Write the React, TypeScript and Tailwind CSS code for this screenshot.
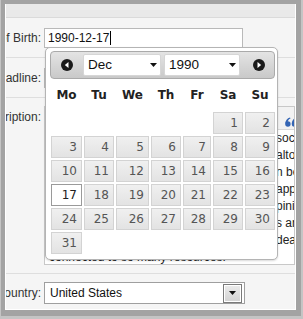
import React from "react";

// December 1990 starts on a Saturday
const weeks: (number | null)[][] = [
  [null, null, null, null, null, 1, 2],
  [3, 4, 5, 6, 7, 8, 9],
  [10, 11, 12, 13, 14, 15, 16],
  [17, 18, 19, 20, 21, 22, 23],
  [24, 25, 26, 27, 28, 29, 30],
  [31, null, null, null, null, null, null],
];

const dayNames = ["Mo", "Tu", "We", "Th", "Fr", "Sa", "Su"];

const gridCols =
  "grid grid-cols-[31px_30px_33px_30px_28px_30px_30px] gap-x-[2px]";

// each line: text hidden under the picker, then the part that peeks out on the right
const editorLines: [string, string][] = [
  ["I have always been interested in how ", "social networks"],
  ["people come together, and I think that ", "altogether"],
  ["a small community of makers ca", "n be"],
  ["a great place to learn, share and ", "apply"],
  ["new skills. I enjoy reading other o", "pinions"],
  ["and I believe that good idea", "s are"],
  ["worth sharing, so I post my i", "deas"],
];

function CircleArrow({ dir }: { dir: "prev" | "next" }) {
  return (
    <svg width="12" height="12" viewBox="0 0 12 12" className="shrink-0">
      <circle cx="6" cy="6" r="6" fill="#1a1a1a" />
      {dir === "prev" ? (
        <path d="M7.5 3 L3.8 6 L7.5 9 Z" fill="#fff" />
      ) : (
        <path d="M4.5 3 L8.2 6 L4.5 9 Z" fill="#fff" />
      )}
    </svg>
  );
}

function Caret() {
  return (
    <svg width="7" height="4" viewBox="0 0 7 4" className="shrink-0">
      <path d="M0 0 H7 L3.5 4 Z" fill="#111" />
    </svg>
  );
}

// blockquote button of the editor toolbar
function QuoteIcon() {
  const mark = "M0.3 6.8 C0.3 3.6 2.2 1.3 5 0.5 L5.5 1.6 C3.9 2.3 3 3.5 2.9 4.6 Z";
  return (
    <svg width="13" height="10" viewBox="0 0 13 10" className="shrink-0" fill="#3465b4">
      <circle cx="2.9" cy="7" r="2.7" />
      <path d={mark} />
      <circle cx="9.4" cy="7" r="2.7" />
      <path d={mark} transform="translate(6.5 0)" />
    </svg>
  );
}

function FakeSelect({ value, className }: { value: string; className: string }) {
  return (
    <div
      className={`flex h-[22px] items-center justify-between rounded-[2px] border border-[#d6d6d6] bg-white pl-[4px] pr-[3px] text-[13.5px] text-[#111] ${className}`}
    >
      <span>{value}</span>
      <Caret />
    </div>
  );
}

function Label({ text, className = "" }: { text: string; className?: string }) {
  return (
    <div
      className={`flex w-[35px] shrink-0 justify-end overflow-hidden whitespace-nowrap text-[12px] leading-[14px] text-[#333] ${className}`}
    >
      {text}
    </div>
  );
}

function DatePicker() {
  return (
    <div className="absolute left-[44px] top-[47px] h-[213px] w-[233px] rounded-[5px] border border-[#b4b4b4] bg-white pl-[4px] pr-[2px] pt-[3px] font-['DejaVu_Sans',Verdana,sans-serif] shadow-[0_1px_2px_rgba(0,0,0,0.15)]">
      <div className="flex h-[28px] items-center rounded-[4px] border border-[#aaa] bg-gradient-to-b from-[#e4e4e4] to-[#c9c9c9] font-['Liberation_Sans',Arial,sans-serif]">
        <div className="ml-[10px]">
          <CircleArrow dir="prev" />
        </div>
        <FakeSelect value="Dec" className="ml-[10px] w-[78px]" />
        <FakeSelect value="1990" className="ml-[3px] w-[76px]" />
        <div className="ml-[13px]">
          <CircleArrow dir="next" />
        </div>
      </div>

      <div className="ml-[1px]">
        <div className={`${gridCols} h-[31px] items-center`}>
          {dayNames.map((d) => (
            <div key={d} className="text-center text-[12px] font-bold text-[#222]">
              {d}
            </div>
          ))}
        </div>
        <div className="mt-[2px] flex flex-col gap-y-[2px]">
          {weeks.map((week, i) => (
            <div key={i} className={gridCols}>
              {week.map((day, j) =>
                day === null ? (
                  <div key={j} className="h-[22px]" />
                ) : day === 17 ? (
                  <div
                    key={j}
                    className="flex h-[22px] items-center justify-end border border-[#9a9a9a] bg-white pr-[4px] text-[12px] text-[#212121]"
                  >
                    {day}
                  </div>
                ) : (
                  <div
                    key={j}
                    className="flex h-[22px] items-center justify-end border border-[#d3d3d3] bg-gradient-to-b from-[#f0f0f0] to-[#e3e3e3] pr-[4px] text-[12px] text-[#555]"
                  >
                    {day}
                  </div>
                )
              )}
            </div>
          ))}
        </div>
      </div>
    </div>
  );
}

export default function App() {
  return (
    <div className="relative h-[319px] w-[303px] overflow-hidden border-b-[3px] border-l border-r-2 border-[#c4c4c4] bg-[#a3a3a3] pb-[6px] pl-[4px] pr-[5px] pt-[4px] font-['Liberation_Sans',Arial,sans-serif]">
      <div className="flex h-[306px] flex-col overflow-hidden border-x border-b border-white bg-[#f5f5f5]">
        {/* top strip */}
        <div className="h-[14px] shrink-0 border-b border-[#dadada] bg-[#e9e9e9]" />

        {/* date of birth */}
        <div className="flex h-[40px] shrink-0 items-center gap-[3px] border-b border-[#dedede]">
          <Label text="Date of Birth:" />
          <div className="flex h-[20px] w-[199px] items-center border border-[#b9b9b9] bg-white pl-[3px] text-[12px] text-[#111]">
            1990-12-17
            <span className="ml-[1px] h-[14px] w-px bg-black" />
          </div>
        </div>

        {/* headline */}
        <div className="flex h-[40px] shrink-0 items-center gap-[3px] border-b border-[#dedede]">
          <Label text="Headline:" />
          <div className="h-[20px] w-[199px] border border-[#b9b9b9] bg-white" />
        </div>

        {/* description */}
        <div className="flex h-[176px] shrink-0 items-start gap-[3px] border-b border-[#dedede]">
          <Label text="Description:" className="mt-[12px]" />
          <div className="mt-[8px] flex h-[159px] w-[260px] flex-col overflow-hidden border border-[#c8c8c8] bg-white">
            <div className="flex h-[23px] shrink-0 items-start border-b border-[#d8d8d8] bg-[#f2f2f2] pl-[240px] pt-[10px]">
              <QuoteIcon />
            </div>
            <div className="flex flex-col pl-[4px] text-[12px] leading-[17px] text-[#222]">
              {editorLines.map(([hidden, shown], i) => (
                <div key={i} className="flex whitespace-nowrap">
                  <span className="w-[227px] shrink-0 overflow-hidden">{hidden}</span>
                  <span>{shown}</span>
                </div>
              ))}
              <div className="whitespace-nowrap">connected to so many resources.</div>
            </div>
          </div>
        </div>

        {/* country */}
        <div className="flex h-[35px] shrink-0 items-center gap-[3px] pt-[3px]">
          <Label text="Country:" />
          <div className="flex h-[22px] w-[201px] items-center justify-between border border-[#9f9f9f] bg-white pl-[5px] pr-[2px] text-[12px] text-[#111]">
            <span>United States</span>
            <div className="flex h-[19px] w-[19px] items-center justify-center border border-[#7a7a7a] bg-gradient-to-b from-[#ececec] to-[#d2d2d2] shadow-[inset_0_0_0_1px_#fff]">
              <Caret />
            </div>
          </div>
        </div>
      </div>

      <DatePicker />
    </div>
  );
}
